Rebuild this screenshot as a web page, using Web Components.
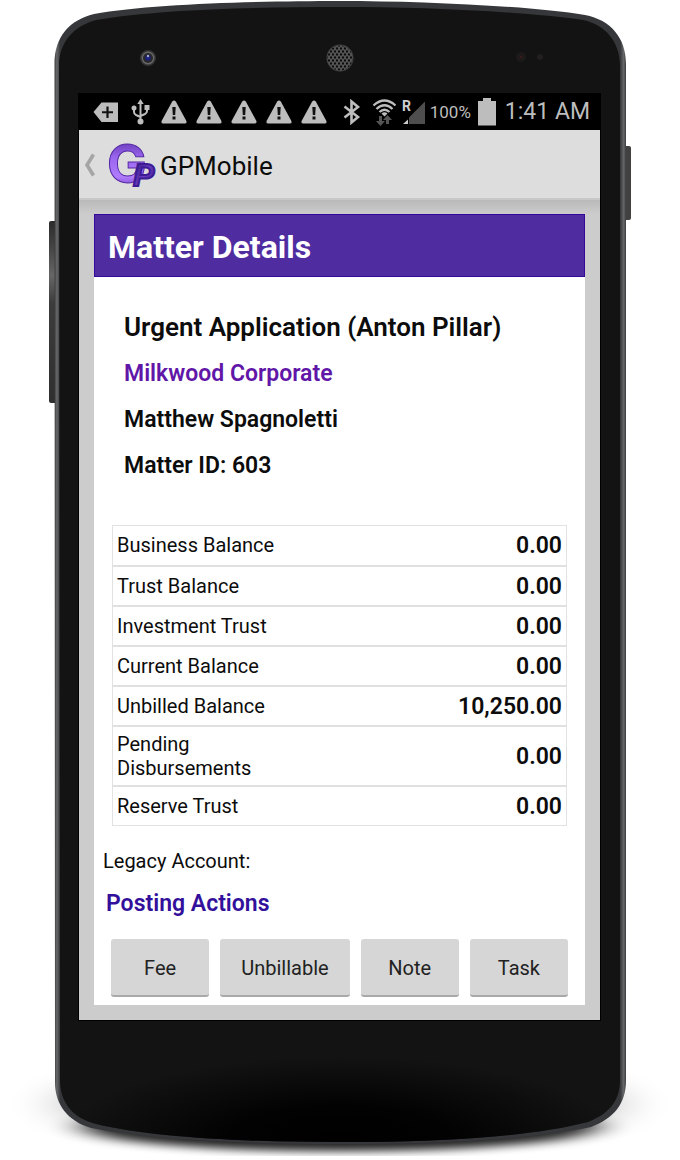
<!DOCTYPE html>
<html lang="en">
<head>
<meta charset="utf-8">
<meta name="viewport" content="width=device-width, initial-scale=1">
<title>GPMobile – Matter Details</title>
<style>
body { margin: 0; background: #fff; font-family: Roboto, "Liberation Sans", sans-serif; color: #0c0c0c; }
</style>
</head>
<body>
<phone-frame>
  <status-bar></status-bar>
  <app-bar>GPMobile</app-bar>
  <matter-card heading="Matter Details">
    <matter-summary></matter-summary>
    <balance-table></balance-table>
    <posting-actions></posting-actions>
  </matter-card>
</phone-frame>

<script>
const define = (name, html, setup) => {
  const template = document.createElement('template');
  template.innerHTML = html;
  customElements.define(name, class extends HTMLElement {
    constructor() {
      super();
      this.attachShadow({ mode: 'open' }).append(template.content.cloneNode(true));
    }
    connectedCallback() { if (setup) setup(this, this.shadowRoot); }
  });
};

define('phone-frame', `
<style>
  :host { display: block; position: relative; padding: 0 80px 140px 79px; }
  .shell { position: absolute; inset: 0; width: 100%; height: 100%; }
  .bezel { position: relative; display: grid; grid-template-columns: 1fr auto 1fr; justify-items: start; align-items: center; height: 94px; padding: 22px 56px 0; box-sizing: border-box; }
  .bezel svg { display: block; }
  .bezel svg:first-child { margin-left: 4px; }
  .bezel svg:last-child { justify-self: end; }
  .screen { position: relative; background: #ccc; outline: 1px solid #000; display: flow-root; }
</style>
<svg class="shell" viewBox="0 0 680 1160" preserveAspectRatio="none" aria-hidden="true">
  <defs>
    <filter id="soft" x="-30%" y="-100%" width="160%" height="300%"><feGaussianBlur stdDeviation="28 12"/></filter>
    <filter id="tight" x="-20%" y="-100%" width="140%" height="300%"><feGaussianBlur stdDeviation="18 4"/></filter>
    <radialGradient id="gloom" cx="340" cy="1140" r="280" gradientUnits="userSpaceOnUse" gradientTransform="translate(0 798) scale(1 .3)">
      <stop offset="0" stop-color="#000"/><stop offset=".4" stop-color="#000" stop-opacity=".9"/><stop offset="1" stop-color="#000" stop-opacity="0"/>
    </radialGradient>
    <linearGradient id="edge" x1="0" x2="1" y1="0" y2="0">
      <stop offset="0" stop-color="#3a3b3c"/><stop offset=".004" stop-color="#66686a"/><stop offset=".01" stop-color="#36373a"/><stop offset=".99" stop-color="#36373a"/><stop offset=".996" stop-color="#66686a"/><stop offset="1" stop-color="#3a3b3c"/>
    </linearGradient>
    <linearGradient id="key" x1="0" x2="0" y1="0" y2="1">
      <stop offset="0" stop-color="#2b2b2b"/><stop offset=".15" stop-color="#454545"/><stop offset=".3" stop-color="#666"/><stop offset=".45" stop-color="#3c3c3c"/><stop offset="1" stop-color="#2f2f2f"/>
    </linearGradient>
    <clipPath id="floor"><rect y="1050" width="680" height="106"/></clipPath>
  </defs>
  <g clip-path="url(#floor)">
    <ellipse cx="340" cy="1104" rx="280" ry="30" opacity=".32" filter="url(#soft)"/>
    <ellipse cx="340" cy="1127" rx="256" ry="24" opacity=".85" filter="url(#tight)"/>
  </g>
  <path d="M49 223q0-2 2-2h5v182h-5q-2 0-2-2z" fill="url(#key)"/>
  <path d="M631 148q0-2-2-2h-5v74h5q2 0 2-2z" fill="#414141"/>
  <path d="M54.500 64C54.500 36 70 20 94 14C150 4 260 1 340 1S530 6 585 15C611 20 626 38 626 64V1080C626 1104 614 1118 591 1127C540 1138 450 1144 340 1144S140 1138 91 1128C68 1121 55 1105 55 1082Z" fill="url(#edge)"/>
  <path d="M59 66C59 42 74 26 96 20C160 9 260 7 340 7S520 11 583 20C606 25 620 42 620 66V1080C620 1102 608 1114 588 1122C530 1137 440 1142 340 1142S150 1137 96 1124C72 1118 60 1102 60 1080Z" fill="#131313"/>
  <path d="M60 1000H620V1080C620 1102 608 1114 588 1122C530 1137 440 1142 340 1142S150 1137 96 1124C72 1118 60 1102 60 1080Z" fill="url(#gloom)"/>
</svg>
<div class="bezel">
  <svg width="18" height="18" viewBox="0 0 18 18" aria-hidden="true"><circle cx="9" cy="9" r="8" fill="#333"/><circle cx="9" cy="9" r="6.500" fill="#686868"/><circle cx="9" cy="9" r="5" fill="#292929"/><circle cx="9" cy="9" r="2.800" fill="#1c217c"/><circle cx="9" cy="7" r="1.200" fill="#a3abd0"/></svg>
  <svg width="28" height="28" viewBox="0 0 28 28" aria-hidden="true">
    <defs><pattern id="mesh" width="4" height="6" patternUnits="userSpaceOnUse"><rect width="4" height="6" fill="#555"/><circle cx="1" cy="1.500" r="1.150" fill="#0b0b0b"/><circle cx="3" cy="4.500" r="1.150" fill="#0b0b0b"/></pattern></defs>
    <circle cx="14" cy="14" r="13.500" fill="#424242"/><circle cx="14" cy="14" r="12.500" fill="url(#mesh)"/>
  </svg>
  <svg width="34" height="14" viewBox="0 0 34 14" aria-hidden="true"><circle cx="11" cy="6" r="5" fill="#1d1a1a"/><circle cx="11" cy="6" r="1.500" fill="#351b19"/><circle cx="30" cy="6" r="3" fill="#221f1f"/></svg>
</div>
<main class="screen"><slot></slot></main>
`);

const warning = `<svg width="26" height="26" viewBox="0 0 26 26"><path d="M11.200 2.400Q13 .4 14.800 2.400L25.400 22Q26 24.500 24 24.500H2Q0 24.500 .6 22Z" fill="#bdbdbd"/><path d="M11.300 8h3.400l-.5 8h-2.400zM11.500 17.500h3v3h-3z" fill="#111"/></svg>`;

define('status-bar', `
<style>
  :host { display: flex; justify-content: space-between; align-items: center; height: 36px; padding: 0 10px 0 14px; background: #000; color: #bdbdbd; }
  div { display: flex; align-items: center; }
  .notes { gap: 9px; }
  .system { gap: 5px; }
  svg { display: block; flex: none; }
  .percent { font-size: 17px; line-height: 36px; }
  .time { font-size: 23px; line-height: 36px; }
</style>
<div class="notes" aria-hidden="true">
  <svg width="26" height="26" viewBox="0 0 26 26"><path d="M8.500 3.500H25V23H8.500L.5 13Z" fill="#bdbdbd"/><path d="M14.500 7.500v11.500M9 13.250h11" stroke="#111" stroke-width="2.200"/></svg>
  <svg width="24" height="26" viewBox="0 0 24 26" fill="none" stroke="#bdbdbd" stroke-width="2"><path d="M12.500 3v19M6 9v4q0 2 2 3l4.500 2M19 8v4q0 2-2 3l-4.500 2"/><path d="M12.500 0l3.200 5H9.300z" fill="#bdbdbd" stroke="none"/><circle cx="12.500" cy="22.500" r="3" fill="#bdbdbd" stroke="none"/><circle cx="6" cy="9" r="2.500" fill="#bdbdbd" stroke="none"/><path d="M16.500 6h5v5h-5z" fill="#bdbdbd" stroke="none"/></svg>
  ${warning.repeat(5)}
</div>
<div class="system">
  <svg width="24" height="26" viewBox="0 0 24 26" fill="none" stroke="#bdbdbd" stroke-width="2.600" aria-hidden="true"><path d="M1.500 7.500L15 18l-6.500 5.500V2.500L15 8 1.500 18.500"/></svg>
  <svg width="24" height="28" viewBox="0 0 24 28" fill="none" stroke="#bdbdbd" stroke-width="2.300" aria-hidden="true"><path d="M1.500 7.500Q12.500-2.500 23.500 7.500M4.500 11Q12.500 3.500 20.500 11M7.500 14Q12.500 9.500 17.500 14"/><path d="M9.500 15.500Q12.500 13 15.500 15.500L12.500 18.500z" fill="#bdbdbd" stroke="none"/><path d="M10 18v5h3l-4.500 5L4 23h3v-5zM14 26v-4h-3l4.500-5 4.500 5h-3v4z" fill="#555" stroke="none"/></svg>
  <svg width="24" height="26" viewBox="0 0 24 26" aria-hidden="true"><path d="M24.500 2V25H8V18.500Z" fill="#4e4e4e"/><path d="M2 25l5-4.500V25z" fill="#ccc"/><text x="1" y="12" font-size="14" font-weight="700" fill="#d0d0d0">R</text></svg>
  <span class="percent">100%</span>
  <svg width="24" height="28" viewBox="0 0 24 28" aria-hidden="true"><path d="M7 0h8v3h5v24.500H2V3h5z" fill="#bdbdbd"/></svg>
  <span class="time">1:41 AM</span>
</div>
`);

define('app-bar', `
<style>
  :host { display: flex; align-items: center; height: 70px; box-sizing: border-box; padding: 2px 4px 0; background: #ddd; border-bottom: 2px solid #c8c8c8; font-size: 26px; line-height: 32px; }
  a { display: flex; align-items: center; color: inherit; text-decoration: none; }
  svg { display: block; }
  .logo { margin: 0 0 0 10px; }
  span { padding-top: 2px; }
</style>
<a href="#back" aria-label="Back">
  <svg width="13" height="24" viewBox="0 0 13 24" aria-hidden="true"><path d="M10.500 1.500L4 12l6.500 10.500" fill="none" stroke="#a5a5a5" stroke-width="3.600"/></svg>
  <svg class="logo" width="54" height="66" viewBox="-2 -9 54 66" font-weight="700">
    <defs><linearGradient id="g" x1="0" y1="0" x2="0" y2="1"><stop offset=".1" stop-color="#6034b0"/><stop offset=".4" stop-color="#9a66ee"/><stop offset=".7" stop-color="#b07cfc"/><stop offset=".9" stop-color="#7440c6"/></linearGradient>
    <linearGradient id="p" x1="0" y1="0" x2="1" y2="1"><stop offset="0" stop-color="#25106f"/><stop offset=".5" stop-color="#6a3bc0"/><stop offset="1" stop-color="#2c1478"/></linearGradient></defs>
    <text x="-1" y="42" font-size="53" font-family="Inter" fill="url(#g)" stroke="#5527a5">G</text>
    <text x="25" y="45" font-size="32" font-family="Liberation Sans" font-style="italic" fill="url(#p)" stroke="#3d1b95" stroke-width="2">P</text>
  </svg>
</a>
<span><slot></slot></span>
`);

define('matter-card', `
<style>
  :host { display: block; padding: 14px 15px 15px; background: linear-gradient(#b9b9b9, #ccc 14px); }
  article { background: #fff; }
  h1 { margin: 0; padding: 4px 13px 0; border: 1px solid #35089c; background: #4f2da1; color: #fff; font-size: 32px; line-height: 57px; font-weight: 700; }
</style>
<article><h1></h1><slot></slot></article>
`, (host, root) => { root.querySelector('h1').textContent = host.getAttribute('heading'); });

define('matter-summary', `
<style>
  :host { display: block; padding: 26px 30px 36px; font-size: 23px; line-height: 46px; font-weight: 600; }
  h2, p { margin: 0; font-weight: inherit; }
  h2 { font-size: 26px; line-height: 48px; }
  a { color: #6116a8; text-decoration: none; }
</style>
<h2>Urgent Application (Anton Pillar)</h2>
<p><a href="#client">Milkwood Corporate</a></p>
<p>Matthew Spagnoletti</p>
<p>Matter ID: 603</p>
`);

define('balance-table', `
<style>
  :host { display: block; padding: 0 18px; }
  table { width: 100%; border-collapse: collapse; border: 1px solid #e2e2e2; }
  tr { height: 40px; }
  tr + tr { border-top: 2px solid #e0e0e0; }
  th, td { padding: 0 4px; box-sizing: border-box; }
  th { width: 45%; text-align: left; font-size: 20px; line-height: 24px; font-weight: 400; }
  td { padding-top: 2px; text-align: right; font-size: 23px; line-height: 24px; font-weight: 600; }
  tr.tall { height: 60px; }
  .tall th { padding-right: 40px; }
</style>
<table><tbody>
<tr><th scope="row">Business Balance</th><td>0.00</td></tr>
<tr><th scope="row">Trust Balance</th><td>0.00</td></tr>
<tr><th scope="row">Investment Trust</th><td>0.00</td></tr>
<tr><th scope="row">Current Balance</th><td>0.00</td></tr>
<tr><th scope="row">Unbilled Balance</th><td>10,250.00</td></tr>
<tr class="tall"><th scope="row">Pending Disbursements</th><td>0.00</td></tr>
<tr><th scope="row">Reserve Trust</th><td>0.00</td></tr>
</tbody></table>
`);

define('posting-actions', `
<style>
  :host { display: block; padding: 20px 17px 8px 9px; }
  p, h2 { margin: 0; }
  p { font-size: 20px; line-height: 30px; }
  h2 { padding: 12px 3px 19px; color: #33109c; font-size: 23px; line-height: 32px; font-weight: 600; }
  div { display: flex; gap: 11px; padding-left: 8px; }
  button { flex: 1 1 0; height: 58px; margin: 0; padding: 2px 21px 0; border: 0; border-bottom: 2px solid #a9a9a9; border-radius: 3px; background: #d6d6d6; color: #222; font: 20px/24px Roboto, "Liberation Sans", sans-serif; }
</style>
<p>Legacy Account:</p>
<h2>Posting Actions</h2>
<div><button type="button">Fee</button><button type="button">Unbillable</button><button type="button">Note</button><button type="button">Task</button></div>
`);
</script>
</body>
</html>
